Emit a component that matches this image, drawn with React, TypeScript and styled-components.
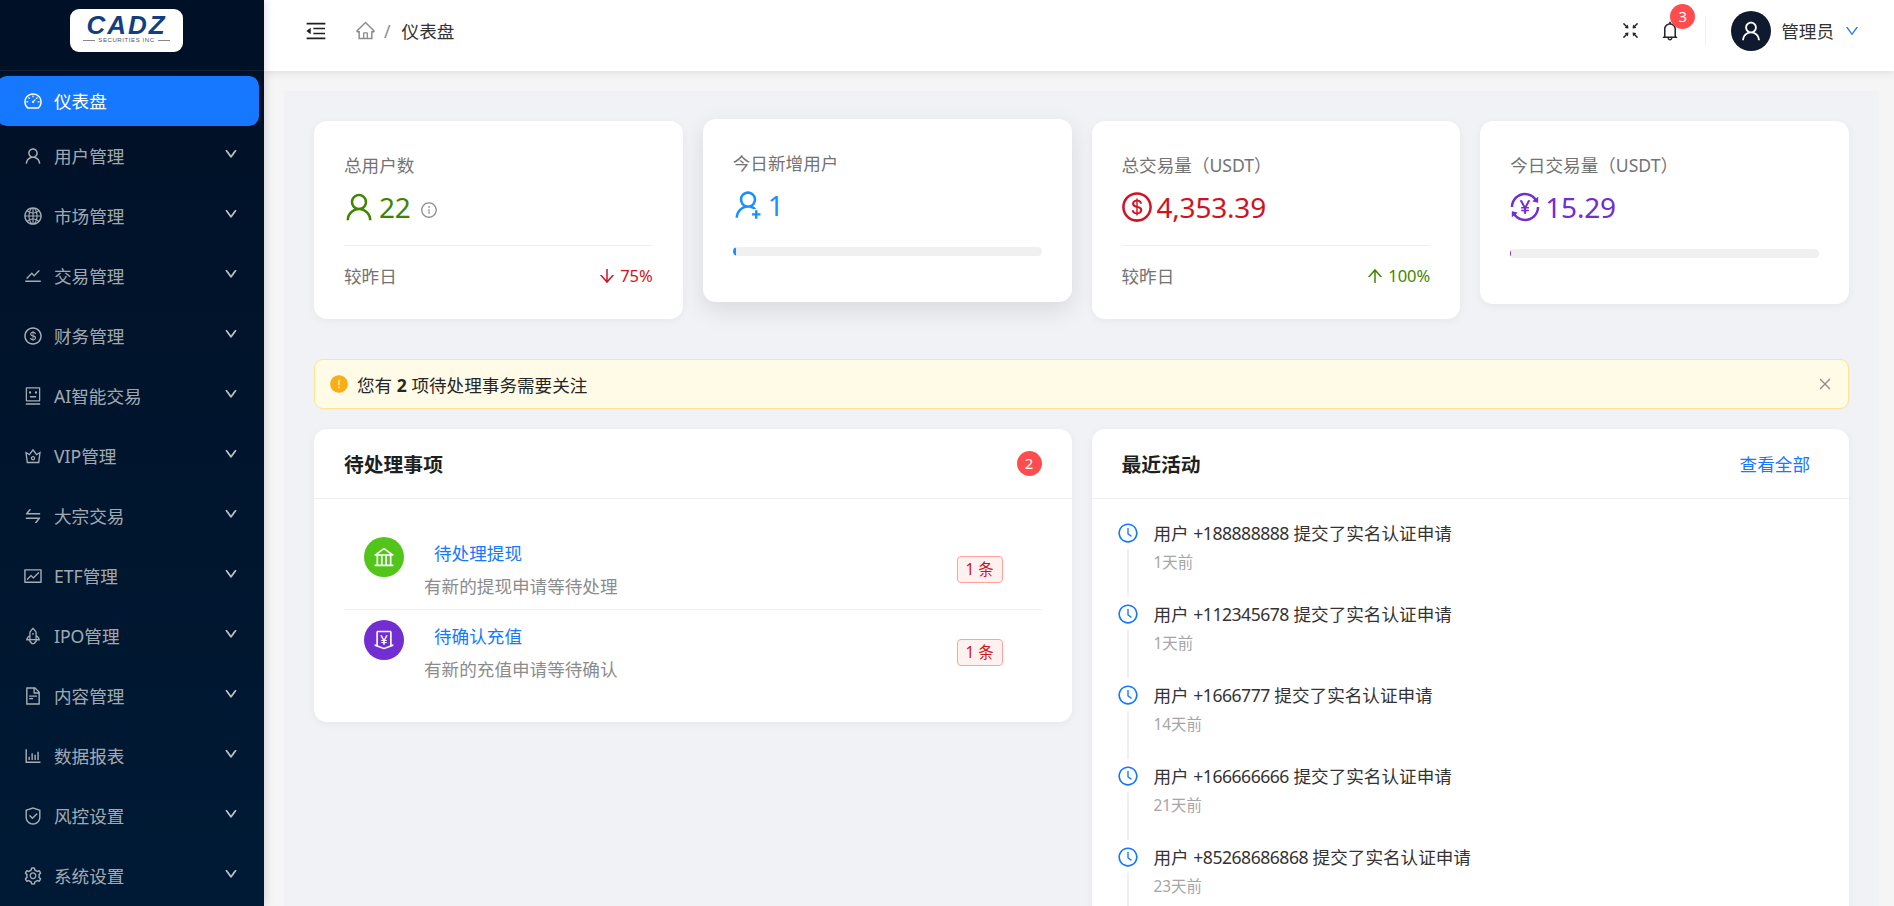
import React from "react";
import styled, { createGlobalStyle } from "styled-components";
import {
  AiOutlineDashboard,
  AiOutlineUser,
  AiOutlineGlobal,
  AiOutlineStock,
  AiOutlineDollar,
  AiOutlineRobot,
  AiOutlineCrown,
  AiOutlineSwap,
  AiOutlineFund,
  AiOutlineRocket,
  AiOutlineFileText,
  AiOutlineBarChart,
  AiOutlineSafety,
  AiOutlineSetting,
  AiOutlineDown,
  AiOutlineMenuFold,
  AiOutlineHome,
  AiOutlineFullscreenExit,
  AiOutlineBell,
  AiOutlineInfoCircle,
  AiOutlineUserAdd,
  AiOutlineTransaction,
  AiOutlineArrowDown,
  AiOutlineArrowUp,
  AiOutlineClose,
  AiOutlineClockCircle,
  AiFillExclamationCircle,
  AiOutlineBank,
  AiOutlineMoneyCollect,
} from "react-icons/ai";

const GlobalStyle = createGlobalStyle`
  html, body {
    margin: 0;
    height: 100%;
    overflow: hidden;
    font-family: "Noto Sans", "Noto Sans CJK SC", sans-serif;
    font-size: 17.6px;
    color: #262626;
  }
  * { box-sizing: border-box; }
`;

const Layout = styled.div`
  display: flex;
  width: 1894px;
  height: 906px;
  overflow: hidden;
  background: #f5f5f5;
`;

const Sidebar = styled.aside`
  flex: 0 0 264px;
  background: linear-gradient(180deg, #001026 0%, #001a35 100%);
  box-shadow: 2px 0 8px rgba(0, 0, 0, 0.12);
  z-index: 2;
`;

const LogoBar = styled.div`
  height: 71px;
  display: flex;
  align-items: flex-start;
  padding: 9px 0 0 70px;
  border-bottom: 1px solid rgba(255, 255, 255, 0.07);
`;

const LogoBox = styled.div`
  width: 113px;
  height: 43px;
  background: #fff;
  border-radius: 9px;
  display: flex;
  flex-direction: column;
  align-items: center;
  padding-top: 5px;
`;

const LogoName = styled.div`
  font-family: "Liberation Sans", sans-serif;
  font-weight: 700;
  font-style: italic;
  font-size: 26px;
  line-height: 22px;
  letter-spacing: 2px;
  color: #123f80;
`;

const LogoSub = styled.div`
  display: flex;
  align-items: center;
  gap: 3px;
  font-family: "Liberation Sans", sans-serif;
  font-size: 6px;
  line-height: 8px;
  letter-spacing: 0.6px;
  color: #555;
  &::before,
  &::after {
    content: "";
    width: 12px;
    height: 1px;
    background: #888;
  }
`;

const Menu = styled.nav`
  padding-top: 5px;
`;

const MenuItem = styled.div<{ $active?: boolean }>`
  height: 50px;
  width: ${(p) => (p.$active ? "262px" : "264px")};
  margin-left: ${(p) => (p.$active ? "-3px" : "0")};
  margin-bottom: ${(p) => (p.$active ? "5px" : "10px")};
  padding-left: ${(p) => (p.$active ? "26px" : "23px")};
  padding-right: 26px;
  display: flex;
  align-items: center;
  gap: 11px;
  border-radius: 10px;
  background: ${(p) => (p.$active ? "#1677ff" : "transparent")};
  color: ${(p) => (p.$active ? "#fff" : "rgba(255, 255, 255, 0.65)")};
  font-size: 17.6px;
  svg {
    flex: none;
    font-size: 20px;
  }
`;

const MenuLabel = styled.span`
  flex: 1;
  line-height: 1;
  padding-top: 2px;
`;

const MenuArrow = styled(AiOutlineDown)`
  && {
    font-size: 14px;
    stroke: currentColor;
    stroke-width: 60;
    margin-bottom: 4px;
  }
`;

const Main = styled.div`
  flex: 1;
  min-width: 0;
  display: flex;
  flex-direction: column;
`;

const Header = styled.header`
  flex: 0 0 71px;
  background: #fff;
  box-shadow: 0 2px 8px rgba(0, 0, 0, 0.09);
  display: flex;
  align-items: center;
  padding: 0 34px 10px 40px;
  z-index: 1;
`;

const FoldIcon = styled(AiOutlineMenuFold)`
  font-size: 24px;
  color: #1f1f1f;
  margin-right: 27px;
`;

const Breadcrumb = styled.div`
  flex: 1;
  display: flex;
  align-items: center;
  gap: 8px;
  color: #8c8c8c;
  svg {
    font-size: 21px;
  }
`;

const CrumbCurrent = styled.span`
  color: #333;
  margin-left: 3px;
`;

const HeaderIcon = styled.span<{ $size: number; $gap: number }>`
  position: relative;
  display: flex;
  color: #262626;
  font-size: ${(p) => p.$size}px;
  margin-right: ${(p) => p.$gap}px;
`;

const BellBadge = styled.span`
  position: absolute;
  left: 11px;
  top: -16px;
  width: 25px;
  height: 25px;
  border-radius: 50%;
  background: #ff4d4f;
  color: #fff;
  font-size: 15px;
  line-height: 25px;
  text-align: center;
`;

const HeaderDivider = styled.span`
  width: 1px;
  height: 30px;
  background: #f0f0f0;
  margin: 0 25px 0 0;
`;

const Avatar = styled.span`
  width: 40px;
  height: 40px;
  border-radius: 50%;
  background: #0f1a2e;
  color: #fff;
  display: flex;
  align-items: center;
  justify-content: center;
  font-size: 24px;
`;

const UserName = styled.span`
  margin: 0 10px 0 10px;
  color: #333;
`;

const UserCaret = styled(AiOutlineDown)`
  color: #1677ff;
  font-size: 16px;
`;

const ContentOuter = styled.div`
  flex: 1;
  min-height: 0;
  padding: 20px 15px 0 20px;
`;

const Content = styled.main`
  height: 100%;
  padding: 30px;
  background: #f0f2f5;
`;

const StatRow = styled.div`
  display: grid;
  grid-template-columns: repeat(4, 1fr);
  gap: 20px;
  align-items: start;
`;

const StatCard = styled.section<{ $raised?: boolean; $tall?: boolean }>`
  background: #fff;
  border-radius: 13px;
  padding: 32px 30px 0;
  height: ${(p) => (p.$tall ? "198px" : "183px")};
  box-shadow: ${(p) =>
    p.$raised
      ? "0 8px 24px rgba(0, 0, 0, 0.1)"
      : "0 2px 8px rgba(0, 0, 0, 0.05)"};
  transform: ${(p) => (p.$raised ? "translateY(-2px)" : "none")};
`;

const StatLabel = styled.div`
  color: #737373;
  line-height: 24px;
`;

const StatValue = styled.div<{ $color: string }>`
  display: flex;
  align-items: center;
  gap: 3px;
  margin-top: 10px;
  height: 40px;
  color: ${(p) => p.$color};
  font-size: 28px;
  letter-spacing: -0.2px;
  svg {
    font-size: 34px;
    margin-left: -2px;
  }
`;

const InfoMark = styled(AiOutlineInfoCircle)`
  && {
    font-size: 18px;
    color: #8c8c8c;
    margin: 6px 0 0 6px;
  }
`;

const StatFooter = styled.div`
  display: flex;
  align-items: center;
  justify-content: space-between;
  margin-top: 18px;
  padding-top: 18px;
  border-top: 1px solid #f0f0f0;
  color: #737373;
  line-height: 24px;
`;

const Trend = styled.span<{ $color: string }>`
  display: flex;
  align-items: center;
  gap: 3px;
  font-size: 16.5px;
  color: ${(p) => p.$color};
  svg {
    font-size: 20px;
  }
`;

const ProgressTrack = styled.div`
  height: 9px;
  margin-top: 22px;
  border-radius: 5px;
  background: #f0f0f0;
  overflow: hidden;
`;

const ProgressFill = styled.div<{ $color: string }>`
  height: 100%;
  border-radius: 5px;
  background: ${(p) => p.$color};
`;

const AlertBar = styled.div`
  display: flex;
  align-items: center;
  height: 50px;
  margin-top: 40px;
  padding: 0 15px;
  border: 1px solid #ffe58f;
  border-radius: 9px;
  background: #fffbe6;
  color: #262626;
  b {
    font-weight: 700;
  }
`;

const AlertIcon = styled(AiFillExclamationCircle)`
  color: #faad14;
  font-size: 20px;
  margin-right: 8px;
  margin-left: -1px;
`;

const AlertText = styled.span`
  flex: 1;
`;

const AlertClose = styled(AiOutlineClose)`
  color: #8c8c8c;
  font-size: 16px;
`;

const PanelRow = styled.div`
  display: grid;
  grid-template-columns: 1fr 1fr;
  gap: 20px;
  align-items: start;
  margin-top: 20px;
`;

const Panel = styled.section`
  background: #fff;
  border-radius: 13px;
  box-shadow: 0 2px 8px rgba(0, 0, 0, 0.05);
`;

const PanelHeader = styled.div`
  height: 70px;
  display: flex;
  align-items: center;
  justify-content: space-between;
  padding: 0 30px;
  border-bottom: 1px solid #f0f0f0;
`;

const PanelTitle = styled.h2`
  margin: 0;
  font-size: 19.8px;
  font-weight: 700;
  color: #1f1f1f;
`;

const CountBadge = styled.span`
  width: 25px;
  height: 25px;
  border-radius: 50%;
  background: #ff4d4f;
  color: #fff;
  font-size: 15px;
  line-height: 25px;
  text-align: center;
`;

const ViewAll = styled.a`
  color: #1677ff;
  margin-right: 9px;
`;

const TaskList = styled.div`
  padding: 27px 30px 24px;
`;

const TaskRow = styled.div<{ $last?: boolean }>`
  display: flex;
  align-items: flex-start;
  height: ${(p) => (p.$last ? "88px" : "84px")};
  padding: ${(p) => (p.$last ? "10px" : "11px")} 39px 0 20px;
  border-bottom: ${(p) => (p.$last ? "none" : "1px solid #f0f0f0")};
`;

const TaskIcon = styled.span<{ $color: string }>`
  flex: none;
  width: 40px;
  height: 40px;
  border-radius: 50%;
  background: ${(p) => p.$color};
  color: #fff;
  display: flex;
  align-items: center;
  justify-content: center;
  font-size: 24px;
`;

const TaskBody = styled.div`
  flex: 1;
  margin-left: 20px;
`;

const TaskTitle = styled.a`
  display: block;
  padding-left: 10px;
  color: #1677ff;
  line-height: 24px;
  margin-top: 4px;
`;

const TaskDesc = styled.div`
  color: #8c8c8c;
  line-height: 24px;
  margin-top: 9px;
`;

const CountTag = styled.span`
  flex: none;
  width: 46px;
  height: 27px;
  margin-top: 19px;
  border: 1px solid #ffa39e;
  border-radius: 4px;
  background: #fff1f0;
  color: #cf1322;
  font-size: 15.4px;
  line-height: 25px;
  text-align: center;
`;

const Timeline = styled.div`
  padding: 22px 30px 0 25px;
`;

const TimelineItem = styled.div`
  position: relative;
  height: 81px;
  display: flex;
  gap: 15px;
`;

const TimelineDot = styled(AiOutlineClockCircle)`
  flex: none;
  font-size: 22px;
  color: #1677ff;
  margin-top: 1px;
`;

const TimelineLine = styled.span`
  position: absolute;
  left: 10px;
  top: 28px;
  bottom: 0;
  width: 2px;
  background: #f0f0f0;
  margin-bottom: 5px;
`;

const ActivityText = styled.div`
  color: #333;
  line-height: 24px;
`;

const Phone = styled.span`
  letter-spacing: -0.5px;
`;

const ActivityTime = styled.div`
  color: #a6a6a6;
  font-size: 15.4px;
  line-height: 22px;
  margin-top: 7px;
`;

const menu = [
  { icon: AiOutlineUser, label: "用户管理" },
  { icon: AiOutlineGlobal, label: "市场管理" },
  { icon: AiOutlineStock, label: "交易管理" },
  { icon: AiOutlineDollar, label: "财务管理" },
  { icon: AiOutlineRobot, label: "AI智能交易" },
  { icon: AiOutlineCrown, label: "VIP管理" },
  { icon: AiOutlineSwap, label: "大宗交易" },
  { icon: AiOutlineFund, label: "ETF管理" },
  { icon: AiOutlineRocket, label: "IPO管理" },
  { icon: AiOutlineFileText, label: "内容管理" },
  { icon: AiOutlineBarChart, label: "数据报表" },
  { icon: AiOutlineSafety, label: "风控设置" },
  { icon: AiOutlineSetting, label: "系统设置" },
];

const activities = [
  { phone: "+188888888", time: "1天前" },
  { phone: "+112345678", time: "1天前" },
  { phone: "+1666777", time: "14天前" },
  { phone: "+166666666", time: "21天前" },
  { phone: "+85268686868", time: "23天前" },
];

export default function App() {
  return (
    <Layout>
      <GlobalStyle />
      <Sidebar>
        <LogoBar>
          <LogoBox>
            <LogoName>CADZ</LogoName>
            <LogoSub>SECURITIES INC</LogoSub>
          </LogoBox>
        </LogoBar>
        <Menu>
          <MenuItem $active>
            <AiOutlineDashboard />
            <MenuLabel>仪表盘</MenuLabel>
          </MenuItem>
          {menu.map((m) => (
            <MenuItem key={m.label}>
              <m.icon />
              <MenuLabel>{m.label}</MenuLabel>
              <MenuArrow />
            </MenuItem>
          ))}
        </Menu>
      </Sidebar>
      <Main>
        <Header>
          <FoldIcon />
          <Breadcrumb>
            <AiOutlineHome />
            <span>/</span>
            <CrumbCurrent>仪表盘</CrumbCurrent>
          </Breadcrumb>
          <HeaderIcon $size={21} $gap={18}>
            <AiOutlineFullscreenExit />
          </HeaderIcon>
          <HeaderIcon $size={22} $gap={24}>
            <AiOutlineBell />
            <BellBadge>3</BellBadge>
          </HeaderIcon>
          <HeaderDivider />
          <Avatar>
            <AiOutlineUser />
          </Avatar>
          <UserName>管理员</UserName>
          <UserCaret />
        </Header>
        <ContentOuter>
          <Content>
            <StatRow>
              <StatCard $tall>
                <StatLabel>总用户数</StatLabel>
                <StatValue $color="#3f8600">
                  <AiOutlineUser />
                  22
                  <InfoMark />
                </StatValue>
                <StatFooter>
                  <span>较昨日</span>
                  <Trend $color="#cf1322">
                    <AiOutlineArrowDown />
                    75%
                  </Trend>
                </StatFooter>
              </StatCard>
              <StatCard $raised>
                <StatLabel>今日新增用户</StatLabel>
                <StatValue $color="#1890ff">
                  <AiOutlineUserAdd />1
                </StatValue>
                <ProgressTrack>
                  <ProgressFill $color="#1890ff" style={{ width: "1%" }} />
                </ProgressTrack>
              </StatCard>
              <StatCard $tall>
                <StatLabel>总交易量（USDT）</StatLabel>
                <StatValue $color="#cf1322">
                  <AiOutlineDollar />
                  4,353.39
                </StatValue>
                <StatFooter>
                  <span>较昨日</span>
                  <Trend $color="#3f8600">
                    <AiOutlineArrowUp />
                    100%
                  </Trend>
                </StatFooter>
              </StatCard>
              <StatCard>
                <StatLabel>今日交易量（USDT）</StatLabel>
                <StatValue $color="#722ed1">
                  <AiOutlineTransaction />
                  15.29
                </StatValue>
                <ProgressTrack>
                  <ProgressFill $color="#722ed1" style={{ width: "0.4%" }} />
                </ProgressTrack>
              </StatCard>
            </StatRow>
            <AlertBar>
              <AlertIcon />
              <AlertText>
                您有 <b>2</b> 项待处理事务需要关注
              </AlertText>
              <AlertClose />
            </AlertBar>
            <PanelRow>
              <Panel>
                <PanelHeader>
                  <PanelTitle>待处理事项</PanelTitle>
                  <CountBadge>2</CountBadge>
                </PanelHeader>
                <TaskList>
                  <TaskRow>
                    <TaskIcon $color="#52c41a">
                      <AiOutlineBank />
                    </TaskIcon>
                    <TaskBody>
                      <TaskTitle>待处理提现</TaskTitle>
                      <TaskDesc>有新的提现申请等待处理</TaskDesc>
                    </TaskBody>
                    <CountTag>1 条</CountTag>
                  </TaskRow>
                  <TaskRow $last>
                    <TaskIcon $color="#722ed1">
                      <AiOutlineMoneyCollect />
                    </TaskIcon>
                    <TaskBody>
                      <TaskTitle>待确认充值</TaskTitle>
                      <TaskDesc>有新的充值申请等待确认</TaskDesc>
                    </TaskBody>
                    <CountTag>1 条</CountTag>
                  </TaskRow>
                </TaskList>
              </Panel>
              <Panel>
                <PanelHeader>
                  <PanelTitle>最近活动</PanelTitle>
                  <ViewAll>查看全部</ViewAll>
                </PanelHeader>
                <Timeline>
                  {activities.map((a, i) => (
                    <TimelineItem key={i}>
                      <TimelineDot />
                      <TimelineLine />
                      <div>
                        <ActivityText>
                          用户 <Phone>{a.phone}</Phone> 提交了实名认证申请
                        </ActivityText>
                        <ActivityTime>{a.time}</ActivityTime>
                      </div>
                    </TimelineItem>
                  ))}
                </Timeline>
              </Panel>
            </PanelRow>
          </Content>
        </ContentOuter>
      </Main>
    </Layout>
  );
}
